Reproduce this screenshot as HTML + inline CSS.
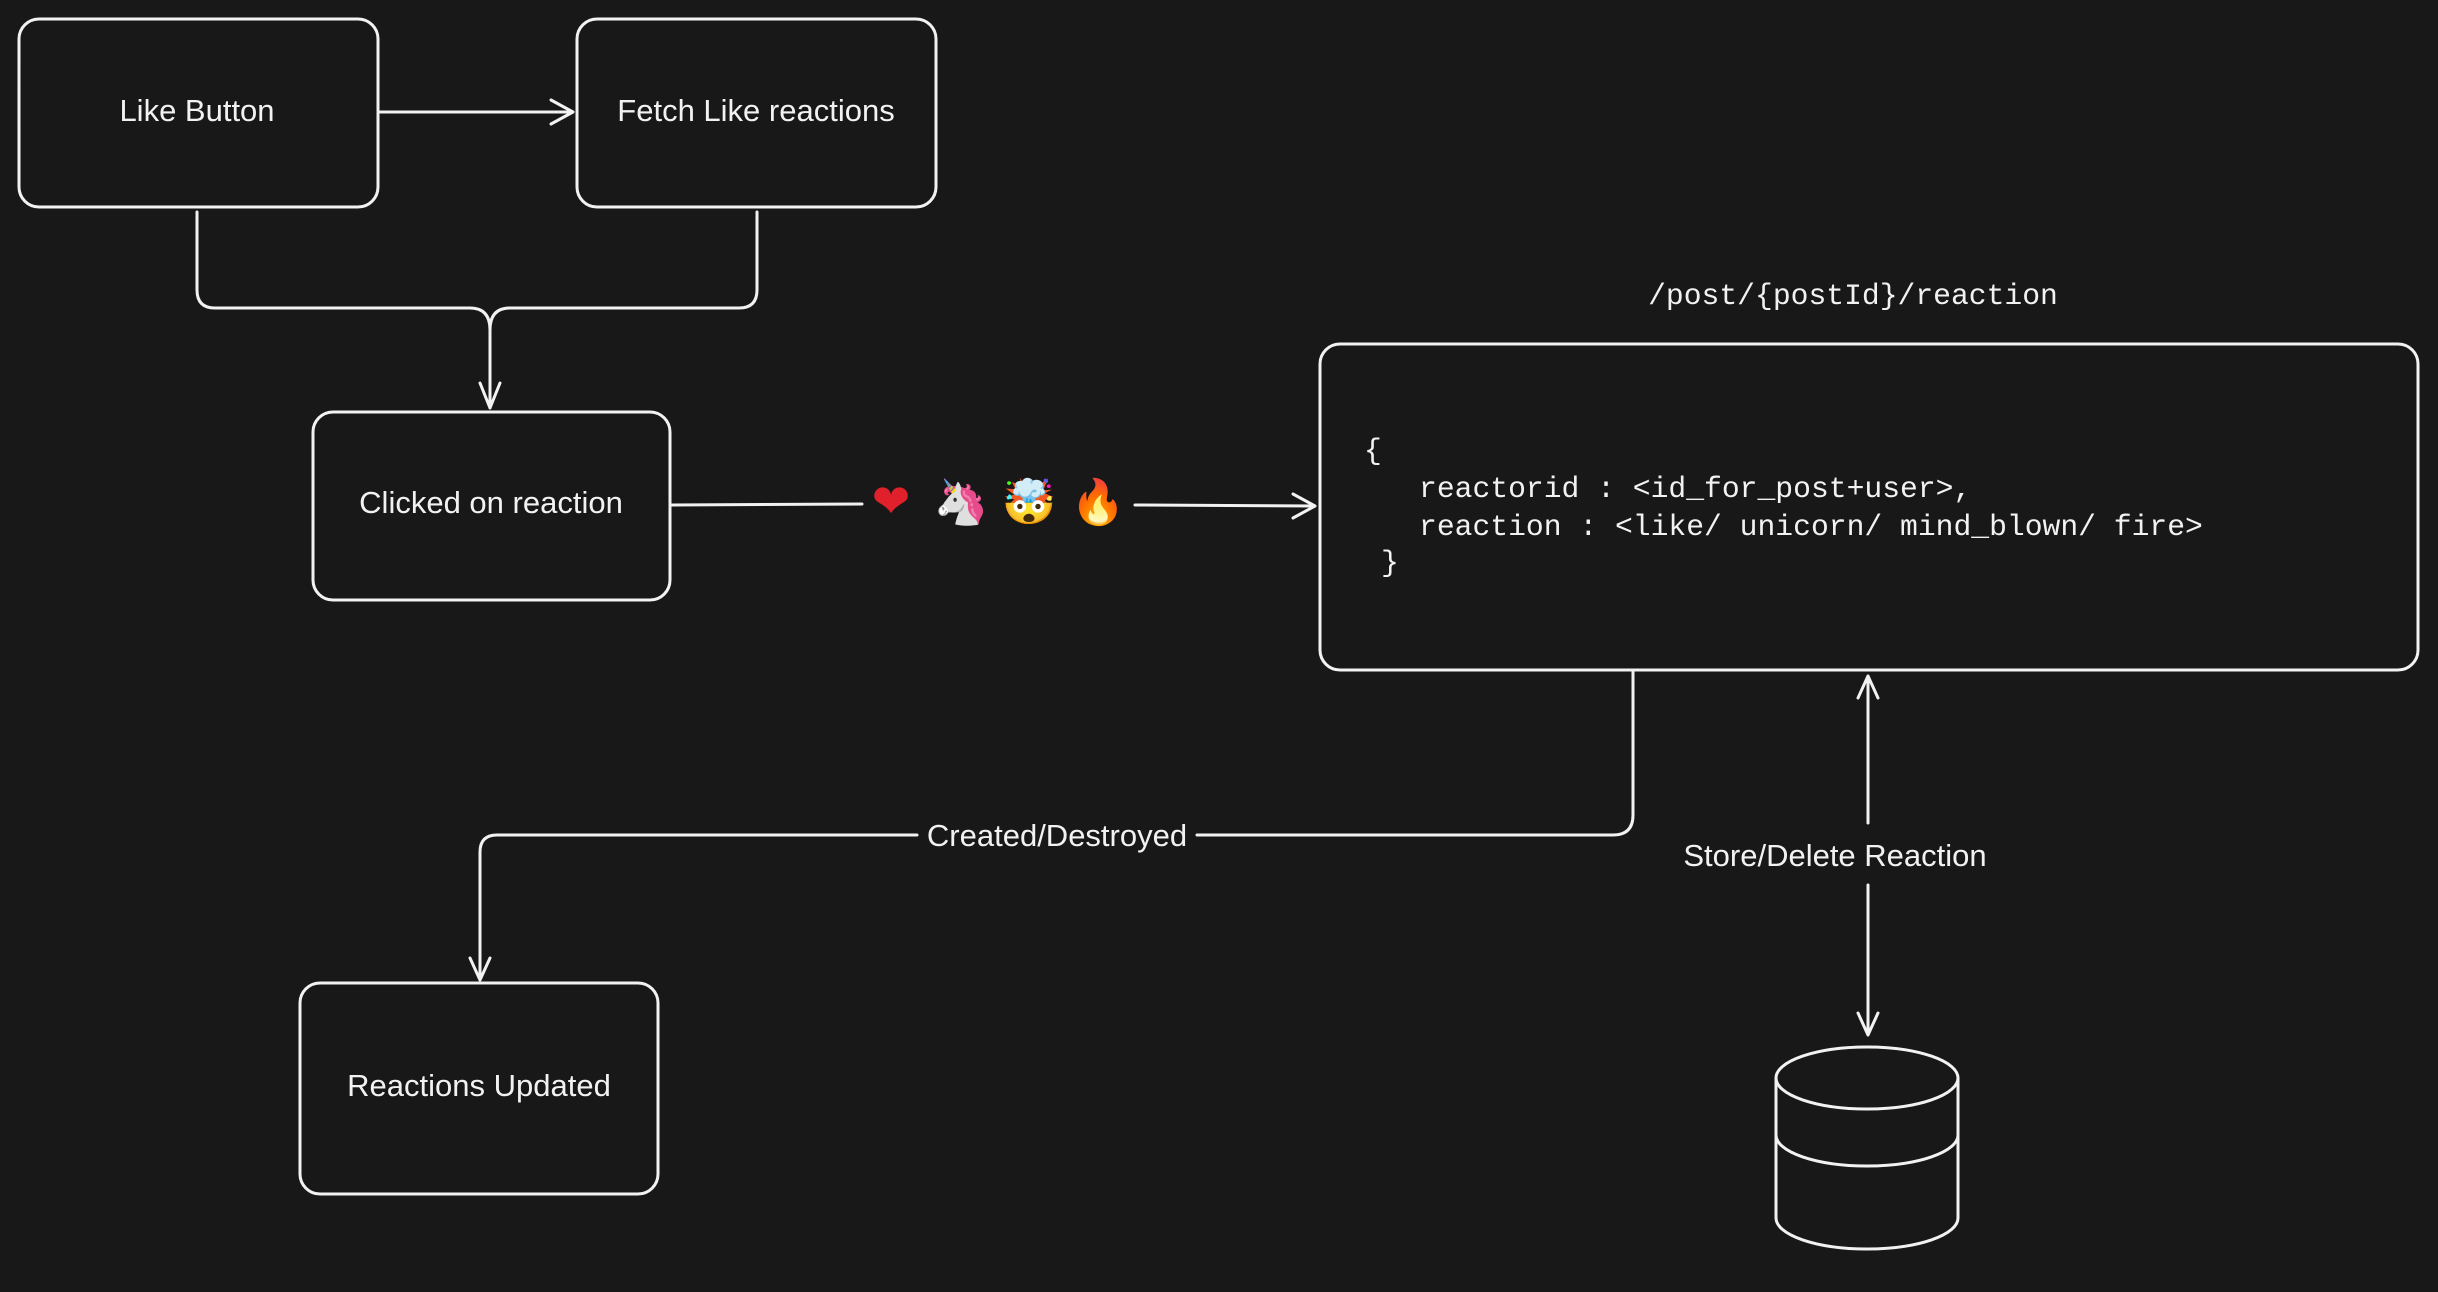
<!DOCTYPE html>
<html><head><style>
html,body{margin:0;padding:0;background:#181818;}
svg{display:block}
text{fill:#f2f2f2}
.s{font-family:"Liberation Sans",sans-serif;font-size:31px}
.m{font-family:"Liberation Mono",monospace;font-size:29.7px}
</style></head><body>
<svg width="2438" height="1292" viewBox="0 0 2438 1292" xmlns="http://www.w3.org/2000/svg">
<rect width="2438" height="1292" fill="#181818"/>
<g fill="none" stroke="#f2f2f2" stroke-width="3" stroke-linecap="round" stroke-linejoin="round">
<rect x="19" y="19" width="359" height="188" rx="20"/>
<rect x="577" y="19" width="359" height="188" rx="20"/>
<rect x="313" y="412" width="357" height="188" rx="20"/>
<rect x="1320" y="344" width="1098" height="326" rx="20"/>
<rect x="300" y="983" width="358" height="211" rx="20"/>
<path d="M380 112 L573 112 M551 100 L573 112 L551 124"/>
<path d="M197 212 L197 290 Q197 308 215 308 L470 308 Q490 308 490 330 L490 408 M480 383 L490 408 L500 383"/>
<path d="M757 212 L757 290 Q757 308 739 308 L510 308 Q490 308 490 330"/>
<path d="M672 505 L862 504"/>
<path d="M1135 505 L1315 506 M1293 494 L1315 506 L1293 518"/>
<path d="M1633 672 L1633 815 Q1633 835 1613 835 L1197 835"/>
<path d="M917 835 L497 835 Q480 835 480 852 L480 980 M470 958 L480 980 L490 958"/>
<path d="M1868 676 L1868 823 M1858 698 L1868 676 L1878 698"/>
<path d="M1868 885 L1868 1035 M1858 1013 L1868 1035 L1878 1013"/>
<ellipse cx="1867" cy="1078" rx="91" ry="31"/>
<path d="M1776 1078 L1776 1218 A91 31 0 0 0 1958 1218 L1958 1078"/>
<path d="M1776 1135 A91 31 0 0 0 1958 1135"/>
</g>
<text class="s" x="197" y="121" text-anchor="middle">Like Button</text>
<text class="s" x="756" y="121" text-anchor="middle">Fetch Like reactions</text>
<text class="s" x="491" y="513" text-anchor="middle">Clicked on reaction</text>
<text class="s" x="479" y="1096" text-anchor="middle">Reactions Updated</text>
<text class="s" x="1057" y="846" text-anchor="middle">Created/Destroyed</text>
<text class="s" x="1835" y="866" text-anchor="middle">Store/Delete Reaction</text>
<text class="m" x="1853" y="304" text-anchor="middle">/post/{postId}/reaction</text>
<text class="m" x="1364" y="459">{</text>
<text class="m" x="1419" y="497">reactorid : &lt;id_for_post+user&gt;,</text>
<text class="m" x="1419" y="535">reaction : &lt;like/ unicorn/ mind_blown/ fire&gt;</text>
<text class="m" x="1381" y="571">}</text>
<text x="891" y="517" text-anchor="middle" style="font-size:46px;fill:#e0202a;font-family:'DejaVu Sans',sans-serif">❤</text>
<text x="961" y="517" text-anchor="middle" style="font-size:44px;font-family:'Noto Color Emoji','DejaVu Sans',sans-serif;fill:#a070d0">🦄</text>
<text x="1029" y="517" text-anchor="middle" style="font-size:44px;font-family:'Noto Color Emoji','DejaVu Sans',sans-serif;fill:#f0b030">🤯</text>
<text x="1098" y="517" text-anchor="middle" style="font-size:44px;font-family:'Noto Color Emoji','DejaVu Sans',sans-serif;fill:#f06020">🔥</text>
</svg>
</body></html>
